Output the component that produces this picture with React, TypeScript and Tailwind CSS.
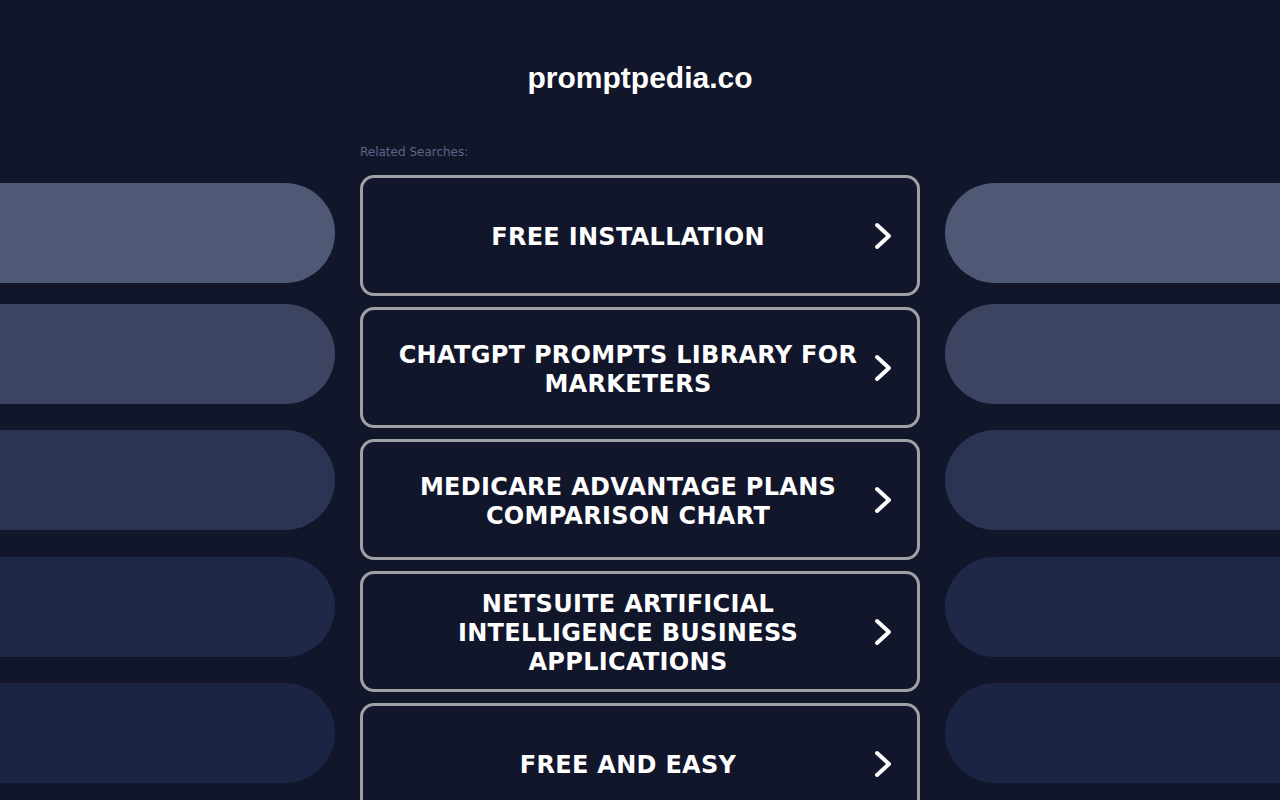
import React from "react";

const cards = [
  "FREE INSTALLATION",
  "CHATGPT PROMPTS LIBRARY FOR MARKETERS",
  "MEDICARE ADVANTAGE PLANS COMPARISON CHART",
  "NETSUITE ARTIFICIAL INTELLIGENCE BUSINESS APPLICATIONS",
  "FREE AND EASY",
];

const pills = [
  { bg: "bg-[#4f5874]", mt: "mt-0" },
  { bg: "bg-[#3c4461]", mt: "mt-[21px]" },
  { bg: "bg-[#2b3452]", mt: "mt-[26px]" },
  { bg: "bg-[#1f2847]", mt: "mt-[27px]" },
  { bg: "bg-[#1c2444]", mt: "mt-[26px]" },
];

function Chevron() {
  return (
    <svg width="20" height="32" viewBox="0 0 20 32" fill="none" className="shrink-0">
      <path d="M4 5 L16 16 L4 27" stroke="white" strokeWidth="4" strokeLinecap="round" strokeLinejoin="round" />
    </svg>
  );
}

function Pills({ side }: { side: "left" | "right" }) {
  return (
    <div className="w-[335px] flex flex-col pt-[40px]">
      {pills.map((p, i) => (
        <div
          key={i}
          className={`h-[100px] ${p.bg} ${p.mt} ${side === "left" ? "rounded-r-[50px]" : "rounded-l-[50px]"}`}
        />
      ))}
    </div>
  );
}

export default function App() {
  return (
    <div className="min-h-screen bg-[#12162b] overflow-hidden">
      <h1 className="pt-[61px] text-center text-[30px] leading-[34px] font-bold text-white font-['Liberation_Sans',Arial,sans-serif]">
        promptpedia.co
      </h1>
      <div className="mt-[48px] flex justify-between">
        <Pills side="left" />
        <div className="w-[560px]">
          <p className="h-[16px] pt-[1px] text-[12px] leading-[16px] text-[#5c6586] font-['DejaVu_Sans',sans-serif]">
            Related Searches:
          </p>
          <div className="mt-[16px] flex flex-col gap-[11px]">
            {cards.map((c) => (
              <a
                key={c}
                className="h-[121px] rounded-[14px] border-[3px] border-[#a0a1a4] bg-[#12162b] flex items-center pl-[20px] pr-[24px]"
              >
                <span className="flex-1 pt-[4px] text-center text-white font-bold text-[24px] leading-[29px] tracking-[0.3px] font-['DejaVu_Sans',Verdana,sans-serif]">
                  {c}
                </span>
                <Chevron />
              </a>
            ))}
          </div>
        </div>
        <Pills side="right" />
      </div>
    </div>
  );
}
